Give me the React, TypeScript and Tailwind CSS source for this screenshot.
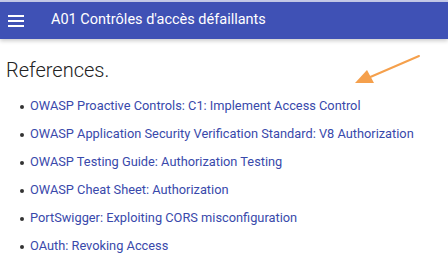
import React from "react";

const links = [
  "OWASP Proactive Controls: C1: Implement Access Control",
  "OWASP Application Security Verification Standard: V8 Authorization",
  "OWASP Testing Guide: Authorization Testing",
  "OWASP Cheat Sheet: Authorization",
  "PortSwigger: Exploiting CORS misconfiguration",
  "OAuth: Revoking Access",
];

export default function App() {
  return (
    <div className="w-[448px] h-[272px] bg-white overflow-hidden relative" style={{ fontFamily: "Roboto, 'Liberation Sans', sans-serif" }}>
      <div className="h-[2px] bg-[#c5cae9]" />
      <header className="h-[37px] bg-[#3f51b5] flex items-center shadow-[0_2px_4px_rgba(0,0,0,0.2)] relative z-10">
        <div className="w-[16px] ml-[8px] flex flex-col gap-[3px]">
          <span className="block h-[2px] bg-white" />
          <span className="block h-[2px] bg-white" />
          <span className="block h-[2px] bg-white" />
        </div>
        <h1 className="ml-[27px] text-[14.5px] text-white font-normal leading-none">A01 Contrôles d'accès défaillants</h1>
      </header>
      <main className="px-[6px]">
        <h2 className="mt-[19px] text-[20px] font-light text-[#222] leading-[24px]">References.</h2>
        <ul className="mt-[16px] pl-[14px] flex flex-col gap-[11px]">
          {links.map((l) => (
            <li key={l} className="flex items-center h-[17px]">
              <span className="w-[4px] h-[4px] rounded-full bg-[#333] mr-[6px]" />
              <a href="#" className="text-[12.8px] text-[#3949ab] leading-none">{l}</a>
            </li>
          ))}
        </ul>
      </main>
      <svg className="absolute left-[350px] top-[52px]" width="75" height="36" viewBox="0 0 75 36">
        <line x1="69" y1="4" x2="18" y2="26" stroke="#f5a04c" strokeWidth="2" strokeLinecap="round" />
        <polygon points="5,31 17,18 24,31" fill="#f5a04c" />
      </svg>
    </div>
  );
}
